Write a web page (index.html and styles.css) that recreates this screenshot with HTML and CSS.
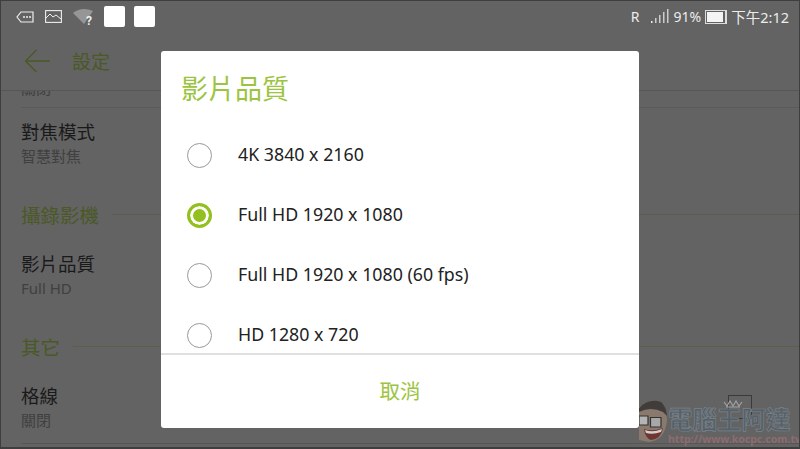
FILE: index.html
```html
<!DOCTYPE html>
<html lang="zh-Hant">
<head>
    <meta charset="UTF-8">
    <meta name="viewport" content="width=device-width, initial-scale=1.0">
    <title>影片品質</title>
    <link rel="stylesheet" href="styles.css">
</head>
<body>
    <div class="screen">
        <div class="status-bar">
            <div class="status-left">
                <svg class="icon" width="18" height="12" viewBox="0 0 18 12"><path d="M5 1H17V11H5L1 6Z" fill="none" stroke="#eee" stroke-width="1.2"/><circle cx="8" cy="6" r="1" fill="#eee"/><circle cx="11" cy="6" r="1" fill="#eee"/><circle cx="14" cy="6" r="1" fill="#eee"/></svg>
                <svg class="icon" width="17" height="13" viewBox="0 0 17 13"><rect x="0.6" y="0.6" width="15.8" height="11.8" fill="none" stroke="#eee" stroke-width="1.1"/><path d="M1 8L5 4L8 7L11 5L16 9" fill="none" stroke="#eee" stroke-width="1"/></svg>
                <svg class="icon wifi" width="21" height="18" viewBox="0 0 21 18"><path d="M0 5Q9 -2 20 3L11 16Z" fill="#969696"/></svg>
                <span class="wifi-q">?</span>
                <div class="notif-box"></div>
                <div class="notif-box"></div>
            </div>
            <div class="status-right">
                <span class="status-r">R</span>
                <svg class="signal" width="18" height="15" viewBox="0 0 18 15"><rect x="0" y="12" width="1.5" height="2" fill="#eee"/><rect x="4" y="9" width="1.5" height="5" fill="#ccc"/><rect x="8" y="6" width="1.5" height="8" fill="#ccc"/><rect x="12" y="3" width="1.5" height="11" fill="#ccc"/><rect x="16" y="0" width="1.5" height="14" fill="#ccc"/></svg>
                <span class="status-pct">91%</span>
                <div class="battery"><div class="battery-fill"></div></div>
                <span class="status-text">下午2:12</span>
            </div>
        </div>
        <div class="toolbar">
            <svg width="26" height="24" viewBox="0 0 26 24"><path d="M12.5 1L1.5 12L12.5 23M1.5 12H26" fill="none" stroke="#4a5926" stroke-width="1.3"/></svg>
            <span class="toolbar-title">設定</span>
        </div>
        <div class="settings">
            <div class="row-clipped">
                <div class="row-sub">關閉</div>
            </div>
            <div class="row">
                <div class="row-title">對焦模式</div>
                <div class="row-sub">智慧對焦</div>
            </div>
            <div class="section"><span>攝錄影機</span><i></i></div>
            <div class="row">
                <div class="row-title">影片品質</div>
                <div class="row-sub">Full HD</div>
            </div>
            <div class="section"><span>其它</span><i></i></div>
            <div class="row row-last">
                <div class="row-title">格線</div>
                <div class="row-sub">關閉</div>
            </div>
        </div>

        <div class="dialog">
            <h1 class="dialog-title">影片品質</h1>
            <div class="options">
                <div class="option"><div class="radio"></div><span>4K 3840 x 2160</span></div>
                <div class="option"><div class="radio checked"></div><span>Full HD 1920 x 1080</span></div>
                <div class="option"><div class="radio"></div><span>Full HD 1920 x 1080 (60 fps)</span></div>
                <div class="option"><div class="radio"></div><span>HD 1280 x 720</span></div>
            </div>
            <div class="dialog-footer">取消</div>
        </div>

        <div class="focus-box"></div>
        <svg class="crown" width="20" height="8" viewBox="0 0 20 8"><path d="M1 2L4 6L7 1L10 6L13 1L16 6L19 2M3 7H17" fill="none" stroke="#a4a4a4" stroke-width="1.1"/></svg>
        <div class="watermark">
            <svg class="mascot" width="29" height="46" viewBox="0 0 29 46">
                <path d="M0 9Q12 2 24 10Q30 18 27 28Q24 42 10 44L0 42Z" fill="#8a7a6e"/>
                <path d="M0 10Q10 0 22 4Q27 8 28 18L24 14Q12 8 0 14Z" fill="#403c39"/>
                <path d="M0 18H9V27H0Z" fill="#b4b4b4" stroke="#333" stroke-width="1.2"/>
                <path d="M11.500 19.500H22V29H11.500Z" fill="#a8a8a8" stroke="#333" stroke-width="1.2"/>
                <path d="M5 31Q14 34 24 30Q22 41 12 42Q6 40 5 31Z" fill="#6e3533"/>
                <path d="M6 32Q14 35 23 31L22 34Q14 37 7 35Z" fill="#d0d0d0"/>
            </svg>
            <div class="wm-text">
                <div class="wm-name">電腦王阿達</div>
                <div class="wm-url">http://www.kocpc.com.tw</div>
            </div>
        </div>
    </div>
</body>
</html>
```

FILE: styles.css
```css
* {
    box-sizing: border-box;
}
body {
    margin: 0;
    background-color: #333;
    font-family: 'Noto Sans', 'Noto Sans CJK TC', sans-serif;
}
.screen {
    position: relative;
    width: 800px;
    height: 449px;
    overflow: hidden;
    background-color: #636363;
    border: 1px solid #3e3e3e;
    border-bottom-width: 2px;
}
.status-bar {
    display: flex;
    justify-content: space-between;
    align-items: center;
    height: 31px;
    padding: 0 10px 0 15px;
    color: #ececec;
}
.status-left,
.status-right {
    display: flex;
    align-items: center;
}
.status-left .icon {
    margin-right: 11px;
}
.status-left .wifi {
    margin-right: 0;
}
.wifi-q {
    width: 9px;
    margin: 8px 9px 0 -8px;
    font: bold 12px/14px 'Roboto', sans-serif;
    color: #eee;
}
.notif-box {
    width: 21px;
    height: 21px;
    margin-right: 9px;
    background-color: #fff;
    border-radius: 2px;
}
.status-r {
    margin-right: 11px;
    font-size: 14px;
}
.signal {
    margin-right: 5px;
}
.status-pct {
    font-size: 14px;
}
.status-text {
    font-size: 14.500px;
    white-space: nowrap;
}
.battery {
    width: 22px;
    height: 14px;
    margin: 0 4px;
    padding: 1px;
    border: 1px solid #ddd;
    border-right-width: 2px;
}
.battery-fill {
    width: 90%;
    height: 100%;
    background-color: #f4f4f4;
}
.toolbar {
    display: flex;
    align-items: center;
    gap: 22px;
    height: 58px;
    padding: 0 0 1px 23px;
}
.toolbar-title {
    font-size: 19px;
    color: #4a5926;
}
.settings {
    height: 357px;
    padding-left: 20px;
    overflow: hidden;
    border-top: 1px solid #565656;
}
.row {
    height: 84px;
    padding-top: 11px;
}
.row-last {
    height: 72px;
    border-bottom: 1px solid #565656;
}
.row-clipped {
    height: 17px;
    overflow: hidden;
    border-bottom: 1px solid #5a5a5a;
}
.row-clipped .row-sub {
    margin-top: -14px;
}
.row-title {
    font-size: 18.5px;
    line-height: 26px;
    color: #1a1a1a;
}
.row-sub {
    font-size: 15px;
    line-height: 22px;
    color: #404040;
}
.section {
    display: flex;
    align-items: center;
    gap: 13px;
    height: 48px;
    padding-bottom: 4px;
    font-size: 19.5px;
    color: #4a5926;
}
.section i {
    flex: 1;
    height: 1px;
    background-color: #5a6048;
}
.dialog {
    position: absolute;
    top: 50px;
    left: 160px;
    display: flex;
    flex-direction: column;
    width: 478px;
    height: 377px;
    overflow: hidden;
    background-color: #fff;
    border-radius: 3px;
}
.dialog-title {
    height: 74px;
    margin: 0;
    padding: 20px 0 0 20px;
    font-size: 27px;
    font-weight: 400;
    line-height: 36px;
    color: #9bc440;
}
.options {
    height: 230px;
    overflow: hidden;
    border-bottom: 2px solid #e0e0e0;
}
.option {
    display: flex;
    align-items: center;
    height: 60px;
    padding-left: 26px;
    font-size: 17.800px;
    color: #222;
}
.option span {
    margin-bottom: 2px;
}
.radio {
    flex: none;
    width: 25px;
    height: 25px;
    margin-right: 26px;
    border: 1px solid #999;
    border-radius: 50%;
}
.radio.checked {
    border: 3px solid #93c01f;
    background-color: #93c01f;
    box-shadow: inset 0 0 0 3px #fff;
}
.dialog-footer {
    flex: 1;
    display: flex;
    justify-content: center;
    align-items: center;
    padding-bottom: 3px;
    font-size: 20.5px;
    color: #9bc440;
}
.focus-box {
    position: absolute;
    top: 394px;
    left: 727px;
    width: 24px;
    height: 24px;
    border: 1px solid #3a3a3a;
}
.crown {
    position: absolute;
    top: 399px;
    left: 722px;
}
.watermark {
    position: absolute;
    top: 405px;
    left: 638px;
    display: flex;
}
.mascot {
    margin-top: -8px;
}
.wm-name {
    font-size: 24.5px;
    font-weight: 700;
    line-height: 27px;
    white-space: nowrap;
    color: #566068;
    -webkit-text-stroke: 0.7px #79828a;
}
.wm-url {
    margin-top: 1px;
    font-size: 10.5px;
    font-weight: 700;
    line-height: 11px;
    color: #8e6b70;
    white-space: nowrap;
}
```
